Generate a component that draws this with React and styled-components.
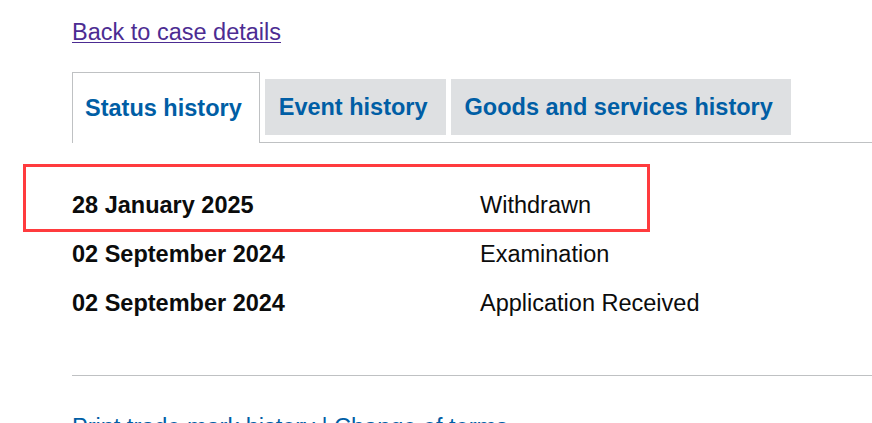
import React from "react";
import styled, { createGlobalStyle } from "styled-components";

const Global = createGlobalStyle`
  html, body { margin: 0; padding: 0; background: #fff; }
  body { font-family: "Liberation Sans", Arial, sans-serif; color: #0b0c0c; }
`;

const Page = styled.main`
  padding: 17px 0 0 72px;
  overflow: hidden;
  height: 423px;
  box-sizing: border-box;
`;

const BackLink = styled.a`
  display: inline-block;
  font-size: 23.5px;
  line-height: 30px;
  color: #4c2c92;
  text-decoration: underline;
  text-underline-offset: 2px;
  text-decoration-thickness: 1px;
`;

const TabList = styled.div`
  display: flex;
  align-items: flex-end;
  gap: 5px;
  margin-top: 25px;
  border-bottom: 1px solid #bfc1c3;
`;

const Tab = styled.a`
  display: block;
  font-size: 23.5px;
  font-weight: 700;
  color: #005ea5;
  text-decoration: none;
  box-sizing: border-box;
  white-space: nowrap;
  ${(p) =>
    p.$active
      ? `
    height: 71px;
    line-height: 71px;
    padding: 0 17px 0 12px;
    background: #fff;
    border: 1px solid #bfc1c3;
    border-bottom: none;
    margin-bottom: -1px;
  `
      : `
    height: 56px;
    line-height: 56px;
    padding: 0 18px 0 14px;
    background: #dee0e2;
    margin-bottom: 7px;
  `}
`;

const Table = styled.div`
  margin-top: 38px;
  display: flex;
  flex-direction: column;
`;

const Row = styled.div`
  position: relative;
  display: grid;
  grid-template-columns: 408px 1fr;
  height: 49px;
  align-items: center;
  font-size: 23.5px;
  ${(p) =>
    p.$highlight &&
    `
    &::after {
      content: "";
      position: absolute;
      left: -49px;
      top: -17px;
      width: 627px;
      height: 68px;
      border: 3px solid #ff3b3e;
      box-sizing: border-box;
      pointer-events: none;
    }
  `}
`;

const DateCell = styled.span`
  font-weight: 700;
`;

const StatusCell = styled.span`
  font-weight: 400;
`;

const Divider = styled.hr`
  border: none;
  border-top: 1px solid #bfc1c3;
  margin: 47px 0 0 0;
`;

const Footer = styled.div`
  margin-top: 36px;
  font-size: 23.5px;
  line-height: 30px;
  color: #005ea5;
`;

const FooterLink = styled.a`
  color: #005ea5;
  text-decoration: underline;
`;

const rows = [
  { date: "28 January 2025", status: "Withdrawn", highlight: true },
  { date: "02 September 2024", status: "Examination" },
  { date: "02 September 2024", status: "Application Received" },
];

export default function App() {
  return (
    <>
      <Global />
      <Page>
        <BackLink href="#">Back to case details</BackLink>
        <TabList>
          <Tab href="#" $active>Status history</Tab>
          <Tab href="#">Event history</Tab>
          <Tab href="#">Goods and services history</Tab>
        </TabList>
        <Table>
          {rows.map((r, i) => (
            <Row key={i} $highlight={r.highlight}>
              <DateCell>{r.date}</DateCell>
              <StatusCell>{r.status}</StatusCell>
            </Row>
          ))}
        </Table>
        <Divider />
        <Footer>
          <FooterLink href="#">Print trade mark history</FooterLink> | <FooterLink href="#">Change of terms</FooterLink>
        </Footer>
      </Page>
    </>
  );
}
